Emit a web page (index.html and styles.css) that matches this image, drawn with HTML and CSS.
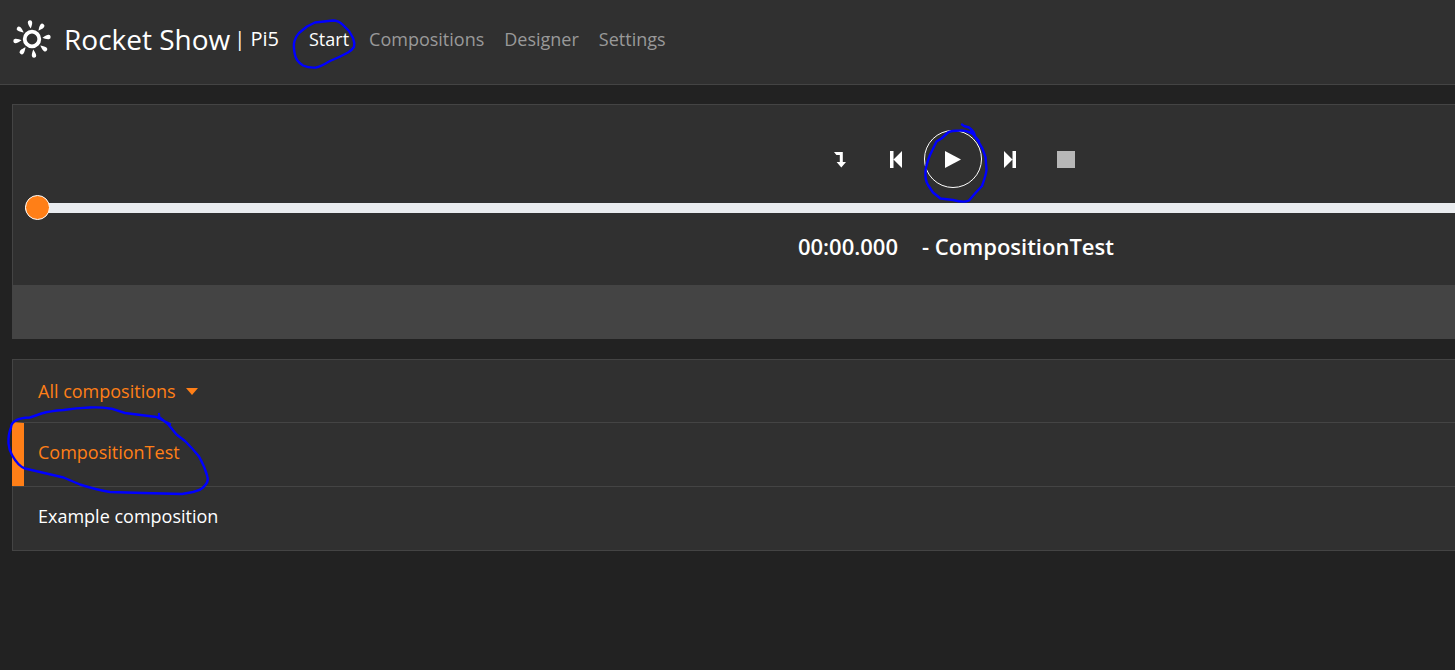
FILE: index.html
```html
<!DOCTYPE html>
<html lang="en">
<head>
<meta charset="utf-8">
<title>Rocket Show</title>
<link rel="stylesheet" href="styles.css">
</head>
<body>
<header class="topbar">
  <a class="brand" href="#">
    <svg class="brand-logo" viewBox="-20 -20 40 40" aria-hidden="true">
      <defs><path id="ray" d="M0-10.500C-.7-12-2.200-14.500-2.200-16.600A2.200 2.200 0 0 1 2.200-16.600C2.200-14.500.7-12 0-10.500Z"/></defs>
      <circle r="7.300" fill="none" stroke="#fff" stroke-width="3.800"/>
      <g fill="#fff" transform="rotate(-7)">
        <use href="#ray"/>
        <use href="#ray" transform="rotate(45)"/>
        <use href="#ray" transform="rotate(90)"/>
        <use href="#ray" transform="rotate(135)"/>
        <use href="#ray" transform="rotate(180)"/>
        <use href="#ray" transform="rotate(225)"/>
        <use href="#ray" transform="rotate(270)"/>
        <use href="#ray" transform="rotate(315)"/>
      </g>
    </svg>
    <span class="brand-name">Rocket Show</span>
    <span class="brand-device">| Pi5</span>
  </a>
  <nav class="nav">
    <a class="nav-link active" href="#">Start</a>
    <a class="nav-link" href="#">Compositions</a>
    <a class="nav-link" href="#">Designer</a>
    <a class="nav-link" href="#">Settings</a>
  </nav>
</header>

<main class="content">
  <section class="panel player">
    <div class="controls">
      <button class="control" type="button" aria-label="Next in set">
        <svg width="12" height="17" viewBox="0 0 12 17"><path d="M0 1H8.800V11H12L7.300 16.500L2.600 11H5.800V4H2.400Z"/></svg>
      </button>
      <button class="control" type="button" aria-label="Previous">
        <svg width="12" height="17" viewBox="0 0 12 17"><path d="M0 0H3.500V17H0ZM12 0V17L3.500 8.500Z"/></svg>
      </button>
      <button class="control play" type="button" aria-label="Play">
        <svg width="16" height="17" viewBox="0 0 16 17"><path d="M0 0L16 8.500L0 17Z"/></svg>
      </button>
      <button class="control" type="button" aria-label="Next">
        <svg width="12" height="17" viewBox="0 0 12 17"><path d="M12 0H8.500V17H12ZM0 0V17L8.500 8.500Z"/></svg>
      </button>
      <button class="control stop" type="button" aria-label="Stop" disabled>
        <svg width="18" height="17" viewBox="0 0 18 17"><path d="M0 0H18V17H0Z"/></svg>
      </button>
    </div>
    <input class="seek" type="range" min="0" max="100" value="0" aria-label="Position">
    <h1 class="now"><span>00:00.000</span><span>- CompositionTest</span></h1>
    <div class="player-footer"></div>
  </section>

  <section class="panel">
    <div class="row">
      <button class="set-toggle" type="button">All compositions
        <svg width="12" height="7" viewBox="0 0 12 7"><path d="M0 0H12L6 7Z"/></svg>
      </button>
    </div>
    <a class="row selected" href="#">CompositionTest</a>
    <a class="row" href="#">Example composition</a>
  </section>
</main>

<svg class="ink" width="1455" height="670" viewBox="0 0 1455 670" aria-hidden="true">
  <path d="M333 20.500C338 20.500 340 22 343 25L349 31L353 38Q355 43 354 47Q352 50 348 52.500Q338 58 330 61Q320 67 316 67.500Q309 68 303 65.500Q296 61 295 55Q293 46 294.500 41Q296 36 299 33L307 26.500L315 22.500Z"/>
  <path d="M962 124.500L964 126L969 127.500Q974 131 975 136M979 141L973 134Q966 130 960 130.500Q951 130.500 948 132.500L941.500 138.500L936.500 141.500L930 155Q925.500 166 925.500 172Q925 180 928 185L933 192.500L940.500 198.500L953 200Q964 203 969 200.500L975 193.500L982 186Q986 175 986.500 170L985.500 157Q983 148 978 141L971 131"/>
  <path d="M170 424L166 422L156.500 417L125 413L111.500 408.700Q100 407 90 407.500Q76 408 63.500 410Q50 411 41.500 413.500L30 417.500Q20 418 16.500 420Q11 423 11 427.500Q8 435 8.500 443.500Q9 450 12 455Q18 466 25 468.500L63.500 477.500L80 484.500Q97 490 110 492L143 493L182 494L193 492Q201 490 203 487.500Q209 482 207.500 477Q205 467 199 456.500Q193 449 185 441L176.500 434.500L168 424L159 417V414"/>
</svg>
</body>
</html>
```

FILE: styles.css
```css
* {
  box-sizing: border-box;
}

body {
  margin: 0;
  min-height: 100vh;
  position: relative;
  overflow: hidden;
  background: #222;
  color: #fff;
  font-family: "Segoe UI", "Open Sans", "Noto Sans", sans-serif;
  font-size: 18px;
  line-height: 28px;
}

a {
  color: inherit;
  text-decoration: none;
}

button {
  padding: 0;
  border: 0;
  background: none;
  color: inherit;
  font: inherit;
}

svg {
  fill: currentColor;
}

.topbar {
  display: flex;
  align-items: center;
  gap: 30px;
  height: 85px;
  padding: 0 12px 6px;
  border-bottom: 1px solid #444;
  background: #303030;
}

.brand {
  display: flex;
  align-items: center;
}

.brand-logo {
  width: 40px;
  height: 40px;
  margin-right: 12px;
}

.brand-name {
  margin-right: 4px;
  font-size: 28px;
}

.brand-device {
  font-size: 20px;
}

.nav {
  display: flex;
  gap: 20px;
}

.nav-link {
  color: #999;
}

.nav-link.active {
  color: #fff;
}

/* Wider than the window: the panels run past its right edge. */
.content {
  display: grid;
  gap: 20px;
  width: 131.4vw;
  padding: 19px 12px;
}

.panel {
  border: 1px solid #444;
  background: #303030;
}

.controls {
  display: flex;
  justify-content: center;
  align-items: center;
  padding: 25px 6px 7px 0;
}

.control {
  display: grid;
  place-items: center;
  width: 56px;
  height: 58px;
}

.play {
  width: 58px;
  border: 1px solid #fff;
  border-radius: 50%;
}

.stop {
  color: #b7b7b7;
}

.seek {
  display: block;
  width: calc(100% - 24px);
  height: 25px;
  margin: 0 12px;
  appearance: none;
  background: none;
}

.seek::-webkit-slider-runnable-track {
  height: 10px;
  border-radius: 5px;
  background: #e9ecef;
}

.seek::-webkit-slider-thumb {
  appearance: none;
  width: 25px;
  height: 25px;
  margin-top: -8px;
  border: 1px solid #fff;
  border-radius: 50%;
  background: #ff7f17;
}

.now {
  display: flex;
  justify-content: center;
  gap: 24px;
  margin: 0;
  padding: 12px 0 25px;
  font-size: 22px;
  font-weight: 600;
  line-height: 28px;
}

.player-footer {
  height: 53px;
  background: #444;
}

.row {
  display: flex;
  align-items: center;
  height: 64px;
  padding: 0 25px 6px;
}

.row:first-child {
  height: 62px;
  padding-bottom: 0;
}

.row + .row {
  border-top: 1px solid #444;
}

.row.selected {
  margin-left: -1px;
  padding-left: 14px;
  border-left: 12px solid #ff7f17;
}

.selected,
.set-toggle {
  color: #ff7f17;
}

.set-toggle {
  display: flex;
  align-items: center;
  gap: 10px;
}

.ink {
  position: absolute;
  top: 0;
  left: 0;
  fill: none;
  stroke: #00f;
  stroke-width: 2.4px;
  stroke-linecap: round;
  stroke-linejoin: round;
  pointer-events: none;
}
```
